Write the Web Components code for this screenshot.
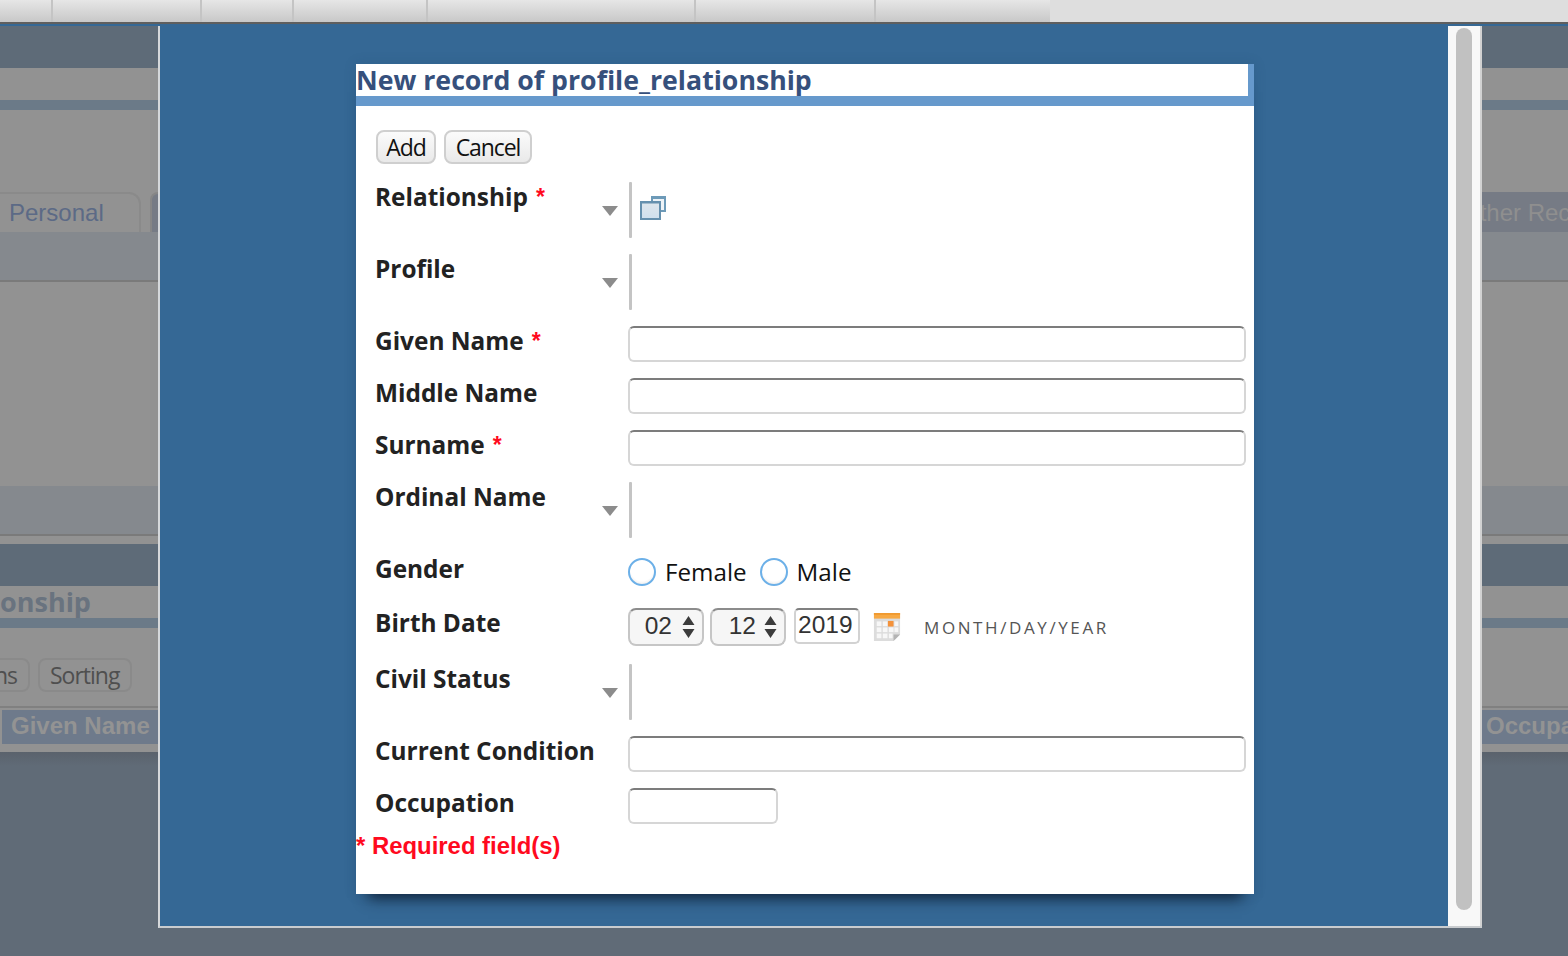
<!DOCTYPE html>
<html>
<head>
<meta charset="utf-8">
<title>New record</title>
<style>
    html, body { margin: 0; height: 100%; overflow: hidden; background: #606b77; }
</style>
</head>
<body>
<backdrop-page></backdrop-page>
<modal-frame>
    <record-dialog heading="New record of profile_relationship"></record-dialog>
</modal-frame>

<script>
class TopTabs extends HTMLElement {
    constructor() {
        super();
        const shadow = this.attachShadow({ mode: 'open' });
        const widths = [53, 149, 92, 134, 268, 180, 174];
        shadow.innerHTML = `
            <style>
                :host { display: flex; height: 22px; background: #dedede; }
                .tab {
                    box-sizing: border-box;
                    height: 22px;
                    border-right: 2px solid #c4c4c4;
                    background: linear-gradient(#e6e6e6, #c8c8c8);
                }
                .tab:last-child { border-right: 0; }
            </style>
            ${widths.map(w => `<div class="tab" style="width:${w}px"></div>`).join('')}
        `;
    }
}
customElements.define('top-tabs', TopTabs);

class BackdropPage extends HTMLElement {
    constructor() {
        super();
        const shadow = this.attachShadow({ mode: 'open' });
        shadow.innerHTML = `
            <style>
                :host {
                    display: block;
                    height: 956px;
                    overflow: hidden;
                    font-family: "Liberation Sans", Arial, sans-serif;
                    background: #606b77;
                }
                .rule { height: 2px; background: #5f5f5f; }
                .edge { height: 2px; background: #356895; }
                .head { height: 42px; background: #5e6b78; }
                .title {
                    height: 32px;
                    background: #929292;
                    font: bold 27px/32px "Open Sans", sans-serif;
                    color: #69737f;
                    white-space: nowrap;
                }
                .band { height: 10px; background: #6b7a88; }
                .gap { background: #929292; }
                .tabrow {
                    display: flex;
                    height: 40px;
                    background: #929292;
                    font-size: 24px;
                    line-height: 41px;
                    white-space: nowrap;
                    overflow: hidden;
                }
                .tabrow .personal {
                    box-sizing: border-box;
                    width: 151px;
                    height: 40px;
                    margin-left: -10px;
                    margin-right: 9px;
                    padding-left: 17px;
                    border: 2px solid #8a8a8a;
                    border-bottom: 0;
                    border-radius: 0 12px 0 0;
                    color: #5c6a86;
                    line-height: 38px;
                }
                .tabrow .second {
                    box-sizing: border-box;
                    width: 30px;
                    border: 2px solid #868686;
                    border-bottom: 0;
                    border-radius: 8px 0 0 0;
                    background: #767b85;
                }
                .tabrow .other {
                    margin-left: auto;
                    width: 86px;
                    background: #767b85;
                    color: #8f8f8f;
                }
                .tabrow .other span { display: block; margin-left: -21px; }
                .strip { height: 48px; background: #85898e; }
                .line { height: 2px; background: #7a7a7a; }
                .btnrow {
                    display: flex;
                    gap: 8px;
                    height: 78px;
                    padding-top: 30px;
                    box-sizing: border-box;
                    background: #929292;
                    font: 23px/30px "Open Sans", sans-serif;
                    letter-spacing: -1px;
                    color: #4f4f4f;
                    overflow: hidden;
                }
                .btnrow div {
                    box-sizing: border-box;
                    height: 34px;
                    border: 2px solid #8a8a8a;
                    border-radius: 8px;
                    padding: 0 11px 0 10px;
                    white-space: nowrap;
                }
                .btnrow .cut { margin-left: -20px; width: 50px; text-align: right; }
                .thead {
                    display: flex;
                    justify-content: space-between;
                    height: 38px;
                    padding-top: 2px;
                    box-sizing: border-box;
                    border-top: 2px solid #808080;
                    background: #929292;
                    color: #939393;
                    font: bold 24px/32px "Liberation Sans", sans-serif;
                    white-space: nowrap;
                    overflow: hidden;
                }
                .thead div { height: 36px; background: #6e7a8b; }
                .thead .given { margin-left: 2px; width: 156px; padding-left: 9px; box-sizing: border-box; }
                .thead .occ { width: 86px; padding-left: 4px; box-sizing: border-box; overflow: hidden; }
                .under { height: 8px; background: #929292; }
                .foot { height: 204px; background: linear-gradient(#5a626c, #606b77 14px); }
            </style>
            <top-tabs></top-tabs>
            <div class="rule"></div>
            <div class="edge"></div>
            <div class="head"></div>
            <div class="title"></div>
            <div class="band"></div>
            <div class="gap" style="height:82px"></div>
            <div class="tabrow">
                <div class="personal">Personal</div>
                <div class="second"></div>
                <div class="other"><span>Other Records</span></div>
            </div>
            <div class="strip"></div>
            <div class="line"></div>
            <div class="gap" style="height:204px"></div>
            <div class="strip"></div>
            <div class="line"></div>
            <div class="gap" style="height:8px"></div>
            <div class="head"></div>
            <div class="title">onship</div>
            <div class="band"></div>
            <div class="btnrow">
                <div class="cut">ns</div>
                <div>Sorting</div>
            </div>
            <div class="thead">
                <div class="given">Given Name</div>
                <div class="occ">Occupation</div>
            </div>
            <div class="under"></div>
            <div class="foot"></div>
        `;
    }
}
customElements.define('backdrop-page', BackdropPage);

class ModalFrame extends HTMLElement {
    constructor() {
        super();
        const shadow = this.attachShadow({ mode: 'open' });
        shadow.innerHTML = `
            <style>
                :host {
                    position: absolute;
                    left: 158px;
                    top: 26px;
                    width: 1324px;
                    height: 902px;
                    box-sizing: border-box;
                    display: flex;
                    background: #356895;
                    border-left: 2px solid #d5d8db;
                    border-bottom: 2px solid #c9cccf;
                }
                .main { flex: 1; padding: 38px 194px 0 196px; overflow: hidden; }
                .track {
                    box-sizing: border-box;
                    width: 34px;
                    padding: 2px 10px 0 8px;
                    background: #f8f8f8;
                    border-right: 2px solid #d2d2d2;
                }
                .thumb { width: 16px; height: 882px; border-radius: 8px; background: #c1c1c1; }
            </style>
            <div class="main"><slot></slot></div>
            <div class="track"><div class="thumb"></div></div>
        `;
    }
}
customElements.define('modal-frame', ModalFrame);

class PushButton extends HTMLElement {
    constructor() {
        super();
        const shadow = this.attachShadow({ mode: 'open' });
        shadow.innerHTML = `
            <style>
                :host {
                    display: block;
                    box-sizing: border-box;
                    width: ${this.getAttribute('width')}px;
                    height: 34px;
                    border: 2px solid #cfcfcf;
                    border-radius: 8px;
                    background: linear-gradient(#fbfbfb, #e9e9e9);
                    font: 23px/31px "Open Sans", sans-serif;
                    letter-spacing: -1.1px;
                    text-align: center;
                    color: #111;
                }
            </style>
            <slot></slot>
        `;
    }
}
customElements.define('push-button', PushButton);

class FormRow extends HTMLElement {
    constructor() {
        super();
        const shadow = this.attachShadow({ mode: 'open' });
        const h = this.getAttribute('height') || 36;
        const req = this.hasAttribute('required') ? '<span class="req">*</span>' : '';
        shadow.innerHTML = `
            <style>
                :host {
                    display: grid;
                    grid-template-columns: 253px 1fr;
                    height: ${h}px;
                }
                .label {
                    font: bold 24.4px/30px "Open Sans", sans-serif;
                    color: #222;
                    white-space: nowrap;
                }
                .req {
                    color: #ff0a1e;
                    margin-left: 8px;
                    font: bold 23px/0 "Liberation Sans", sans-serif;
                    vertical-align: 1px;
                }
                .control { display: flex; align-items: flex-start; min-width: 0; }
            </style>
            <div class="label">${this.getAttribute('label')}${req}</div>
            <div class="control"><slot></slot></div>
        `;
    }
}
customElements.define('form-row', FormRow);

class LookupField extends HTMLElement {
    constructor() {
        super();
        const shadow = this.attachShadow({ mode: 'open' });
        shadow.innerHTML = `
            <style>
                :host { display: flex; height: 56px; margin-left: -26px; }
                .arrow { width: 16px; margin: 24px 10px 0 0; height: 10px; }
                .bar { width: 3px; height: 56px; margin-left: 1px; background: #c4c4c4; border-radius: 1px; }
            </style>
            <svg class="arrow" viewBox="0 0 16 10"><path d="M0 0H16L8 10Z" fill="#8c8c8c"/></svg>
            <div class="bar"></div>
            <slot></slot>
        `;
    }
}
customElements.define('lookup-field', LookupField);

class OpenIcon extends HTMLElement {
    constructor() {
        super();
        const shadow = this.attachShadow({ mode: 'open' });
        shadow.innerHTML = `
            <style>:host { display: block; width: 28px; height: 26px; margin: 13px 0 0 7px; }</style>
            <svg width="28" height="26" viewBox="0 0 28 26">
                <defs>
                    <linearGradient id="glass" x1="0" y1="0" x2="0" y2="1">
                        <stop offset="0" stop-color="#dfe6ec"/>
                        <stop offset="1" stop-color="#cfe0ee"/>
                    </linearGradient>
                </defs>
                <rect x="13" y="2" width="13" height="14" fill="#eef3f7" stroke="#6d9ab8" stroke-width="2"/>
                <rect x="13" y="2" width="13" height="2" fill="#6d9ab8"/>
                <rect x="2" y="7" width="19" height="17" fill="url(#glass)" stroke="#6590ae" stroke-width="2"/>
                <rect x="2" y="7" width="19" height="1.5" fill="#6590ae"/>
            </svg>
        `;
    }
}
customElements.define('open-icon', OpenIcon);

class TextField extends HTMLElement {
    constructor() {
        super();
        const shadow = this.attachShadow({ mode: 'open' });
        const w = this.getAttribute('width');
        shadow.innerHTML = `
            <style>
                :host {
                    display: block;
                    box-sizing: border-box;
                    ${w ? `width: ${w}px;` : 'flex: 1;'}
                    height: 36px;
                    margin-right: ${w ? 0 : 8}px;
                    border: 2px solid #d6d6d6;
                    border-top-color: #7c7c7c;
                    border-radius: 6px;
                    background: #fff;
                }
            </style>
        `;
    }
}
customElements.define('text-field', TextField);

class RadioOption extends HTMLElement {
    constructor() {
        super();
        const shadow = this.attachShadow({ mode: 'open' });
        shadow.innerHTML = `
            <style>
                :host {
                    display: flex;
                    align-items: center;
                    gap: 9px;
                    height: 36px;
                    margin-right: 13px;
                    font: 24.2px/36px "Open Sans", sans-serif;
                    color: #111;
                }
                .dot {
                    box-sizing: border-box;
                    width: 28px;
                    height: 28px;
                    border: 2px solid #6cb0e8;
                    border-radius: 50%;
                    background: radial-gradient(circle at 50% 40%, #fff 60%, #dcdcdc);
                }
            </style>
            <div class="dot"></div>
            <slot></slot>
        `;
    }
}
customElements.define('radio-option', RadioOption);

class DateField extends HTMLElement {
    constructor() {
        super();
        const shadow = this.attachShadow({ mode: 'open' });
        const spin = '<svg width="13" height="24" viewBox="0 0 13 24"><path d="M6.5 1L12.5 10H.5ZM6.5 23L12.5 14H.5Z" fill="#3c3c3c"/></svg>';
        shadow.innerHTML = `
            <style>
                :host {
                    display: flex;
                    align-items: flex-start;
                    font: 24.5px/30px "Liberation Sans", sans-serif;
                    color: #333;
                }
                .sel {
                    box-sizing: border-box;
                    display: flex;
                    align-items: center;
                    justify-content: flex-end;
                    width: 76px;
                    height: 38px;
                    margin-right: 6px;
                    padding-right: 7px;
                    border: 2px solid #c6c6c6;
                    border-top-color: #8c8c8c;
                    border-radius: 8px;
                    background: #f6f6f6;
                }
                .sel span { margin-top: -2px; }
                .year {
                    box-sizing: border-box;
                    width: 66px;
                    height: 36px;
                    margin-left: 2px;
                    padding-left: 2px;
                    border: 2px solid #d2d2d2;
                    border-top-color: #808080;
                    border-radius: 5px;
                }
                svg.cal { margin: 4px 0 0 13px; }
                .hint {
                    margin: 3px 0 0 23px;
                    font: 17px/34px "Open Sans", sans-serif;
                    color: #555;
                    letter-spacing: 2.6px;
                }
            </style>
            <div class="sel"><span style="margin-right:10px">02</span>${spin}</div>
            <div class="sel"><span style="margin-right:8px">12</span>${spin}</div>
            <div class="year">2019</div>
            <svg class="cal" width="28" height="30" viewBox="0 0 30 32">
                <path d="M1 1H29V24L22 31H1Z" fill="#dcdcdc"/>
                <rect x="1" y="1" width="28" height="6" fill="#f7a944"/>
                <rect x="1" y="1" width="28" height="2" fill="#f09a30"/>
                <g fill="#f7f7f7">
                    <rect x="4" y="10" width="5" height="5"/><rect x="10.5" y="10" width="5" height="5"/>
                    <rect x="23" y="10" width="4" height="5"/>
                    <rect x="4" y="16.5" width="5" height="5"/><rect x="10.5" y="16.5" width="5" height="5"/>
                    <rect x="17" y="16.5" width="5" height="5"/><rect x="23" y="16.5" width="4" height="5"/>
                    <rect x="4" y="23" width="5" height="5"/><rect x="10.5" y="23" width="5" height="5"/><rect x="17" y="23" width="4" height="5"/>
                </g>
                <rect x="16" y="9.5" width="6" height="6" fill="#f4923a"/>
                <path d="M22 31V24H29Z" fill="#b4b4b4"/>
            </svg>
            <div class="hint">MONTH/DAY/YEAR</div>
        `;
    }
}
customElements.define('date-field', DateField);

class RecordDialog extends HTMLElement {
    constructor() {
        super();
        const shadow = this.attachShadow({ mode: 'open' });
        shadow.innerHTML = `
            <style>
                :host {
                    display: block;
                    height: 830px;
                    background: #fff;
                    box-shadow: 0 16px 14px -12px rgba(10, 25, 45, .9), 0 0 12px rgba(30, 60, 90, .15);
                }
                .title {
                    height: 32px;
                    border-right: 6px solid #6699cc;
                    border-bottom: 10px solid #6699cc;
                    font: bold 26.7px/32px "Open Sans", sans-serif;
                    color: #36507c;
                    white-space: nowrap;
                }
                .buttons { display: flex; gap: 8px; padding: 24px 0 0 20px; }
                form {
                    display: flex;
                    flex-direction: column;
                    gap: 16px;
                    margin: 18px 0 0 19px;
                }
                .radios { display: flex; }
                .required {
                    margin-top: 6px;
                    font: bold 23.9px/32px "Liberation Sans", sans-serif;
                    color: #ff0a1e;
                }
            </style>
            <div class="title">${this.getAttribute('heading')}</div>
            <div class="buttons">
                <push-button width="60">Add</push-button>
                <push-button width="88">Cancel</push-button>
            </div>
            <form onsubmit="return false">
                <form-row label="Relationship" required height="56"><lookup-field><open-icon></open-icon></lookup-field></form-row>
                <form-row label="Profile" height="56"><lookup-field></lookup-field></form-row>
                <form-row label="Given Name" required><text-field></text-field></form-row>
                <form-row label="Middle Name"><text-field></text-field></form-row>
                <form-row label="Surname" required><text-field></text-field></form-row>
                <form-row label="Ordinal Name" height="56"><lookup-field></lookup-field></form-row>
                <form-row label="Gender" height="38">
                    <div class="radios">
                        <radio-option>Female</radio-option>
                        <radio-option>Male</radio-option>
                    </div>
                </form-row>
                <form-row label="Birth Date" height="40"><date-field></date-field></form-row>
                <form-row label="Civil Status" height="56"><lookup-field></lookup-field></form-row>
                <form-row label="Current Condition"><text-field></text-field></form-row>
                <form-row label="Occupation"><text-field width="150"></text-field></form-row>
            </form>
            <div class="required">* Required field(s)</div>
        `;
    }
}
customElements.define('record-dialog', RecordDialog);
</script>
</body>
</html>
